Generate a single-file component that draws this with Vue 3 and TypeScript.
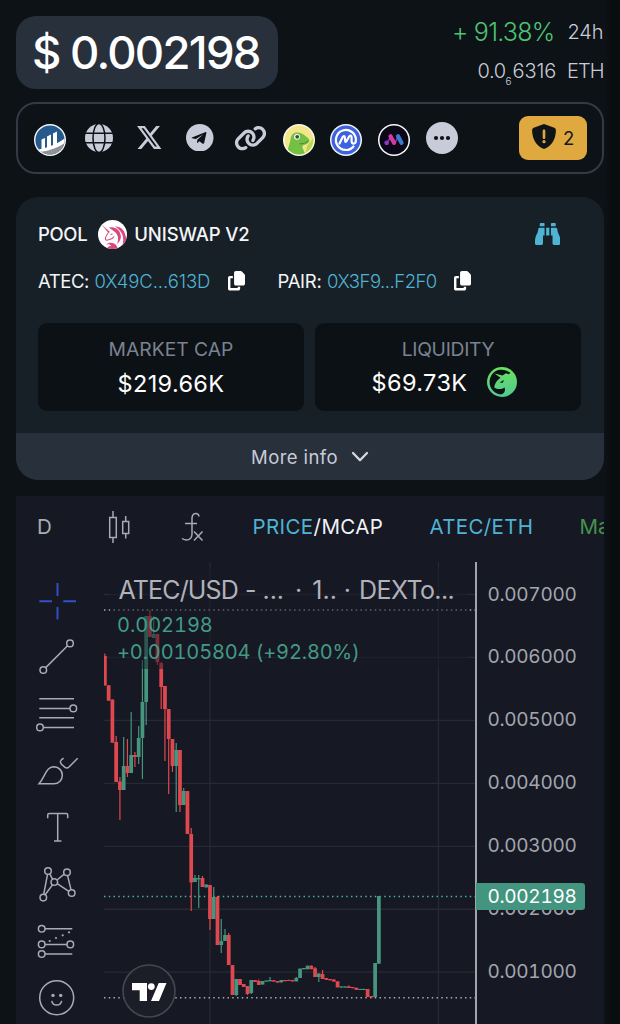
<script setup lang="ts">
interface Candle {
  high: number
  top: number
  bottom: number
  low: number
  up: boolean
}

const STEP = 3.753
const FIRST = 104.9

// Each entry: high, body top, body bottom, low, direction (1 = up, 0 = down)
const raw: [number, number, number, number, number][] = [
  [653.5, 656, 685.5, 685.5, 0], [685.3, 685.3, 700.7, 700.7, 0], [699.5, 699.5, 742.7, 742.7, 0],
  [736, 742, 782, 782, 0], [777, 781.5, 790, 820, 0], [737, 766, 790, 790, 1], [739, 766, 773, 777, 0],
  [712, 755, 773, 773, 1], [752, 755, 757, 767, 0], [726, 738, 757, 764, 1], [660, 702, 738, 779, 1],
  [616, 616, 702, 725, 1], [610, 616, 637, 637, 0], [616, 634, 638, 638, 1], [634, 634, 662, 665, 0],
  [662, 663, 687, 709, 0], [686, 686, 709, 761, 0], [709, 709, 739, 794, 0], [739, 739, 766, 772, 0],
  [743, 750, 766, 812, 1], [750, 750, 805, 812, 0], [788, 791, 805, 805, 1], [791, 791, 834, 834, 0],
  [828, 834, 882.5, 911, 0], [875, 878, 882, 882, 1], [875, 878, 879.4, 908, 1], [876, 878, 887, 887, 0],
  [884.5, 884.5, 887.4, 887.4, 1], [885, 885, 919, 930, 0], [887, 897, 919, 919, 1], [896, 897, 945, 945, 0],
  [919, 941, 945, 953, 1], [929, 935, 941, 941, 1], [933, 935, 965, 965, 0], [965, 965, 995, 995, 0],
  [979, 979, 995, 996, 1], [979, 979, 985, 985, 0], [984, 984, 987, 987, 0], [986, 986, 994, 995, 0],
  [980, 980, 993, 994, 1], [980, 980, 982, 982, 0], [979.5, 981, 985, 985, 0], [981, 981, 984.5, 984.5, 1],
  [980.5, 980.5, 981.7, 981.7, 1], [977, 980, 981.3, 981.3, 1], [980.2, 980.2, 981.6, 981.6, 0],
  [981, 981, 982.6, 982.6, 0], [980, 980, 982.4, 982.4, 1], [980, 980, 981.2, 981.2, 0],
  [979.6, 980, 981, 981, 0], [980, 980, 981.4, 981.4, 0], [977, 978, 981.4, 981.4, 1], [968.6, 968.6, 978, 978, 1],
  [968, 968, 969.3, 969.3, 1], [965.7, 965.7, 969.2, 969.2, 1], [965.3, 965.7, 969.2, 969.2, 0],
  [967, 968.3, 977, 977, 0], [973.5, 973.5, 977, 982, 1], [970, 974, 979, 979, 0], [978, 978, 979.8, 979.8, 0],
  [979, 979, 980.3, 980.3, 0], [979.3, 979.5, 981.6, 981.6, 0], [981.3, 981.3, 987.4, 987.4, 0],
  [986.4, 986.4, 987.6, 987.6, 1], [986.4, 986.4, 987.6, 987.6, 1], [985.4, 986.4, 988, 988, 0],
  [987, 987, 988.2, 988.2, 0], [987.5, 987.8, 989.8, 989.8, 0], [988.9, 988.9, 990, 990, 1],
  [988.9, 988.9, 990, 990, 1], [989, 989, 997, 997, 0], [996, 996, 997.4, 997.4, 0],
  [963, 963, 997, 997, 1], [896, 896, 963.7, 963.7, 1],
]

const candles: Candle[] = raw.map(([high, top, bottom, low, up]) => ({ high, top, bottom, low, up: up === 1 }))
const prices = ['0.007000', '0.006000', '0.005000', '0.004000', '0.003000', '0.002000', '0.001000']
const gridY = prices.map((_, i) => 594.5 + i * 62.95)
</script>

<template>
  <main class="page">
    <header class="top">
      <div class="price"><span>$ 0.002198</span></div>
      <div class="change">
        <div class="row"><span class="pct">+ 91.38%</span><span class="unit">24h</span></div>
        <div class="row"><span class="eth"><span class="lead">0.0</span><sub>6</sub><span>6316</span></span><span class="unit">ETH</span></div>
      </div>
    </header>

    <nav class="links">
      <svg class="ic coin" viewBox="0 0 32 32">
        <defs><clipPath id="c1"><circle cx="16" cy="16" r="14.6" /></clipPath></defs>
        <circle cx="16" cy="16" r="16" fill="#f4f6f8" />
        <g clip-path="url(#c1)">
          <rect width="32" height="32" fill="#275a8c" />
          <path d="M0 27.500C9 26 18 24 32 14V32H0Z" fill="#8f9196" />
          <path d="M0 26C10 25 20 22 32 13.500V18C24 24 14 27.500 2 28.500Z" fill="#fff" />
          <path d="M7.500 15.500 11 14V26H7.500ZM13 12.500 17 10.500V25H13ZM19 9.500 23 7.500V22H19Z" fill="#fff" />
        </g>
      </svg>
      <svg class="ic globe" viewBox="0 0 28 28">
        <circle cx="14" cy="14" r="14" fill="#c9cbd9" />
        <g fill="none" stroke="#0d1216" stroke-width="1.500">
          <ellipse cx="14" cy="14" rx="6" ry="14.500" />
          <path d="M0 9.200H28M0 18.800H28" />
        </g>
      </svg>
      <svg class="ic xlogo" viewBox="1.200 2.200 21.700 19.600" preserveAspectRatio="none">
        <path fill="#c9cbd9" d="M18.244 2.250h3.308l-7.227 8.260 8.502 11.240H16.170l-5.214-6.817L4.990 21.750H1.680l7.730-8.835L1.254 2.250H8.080l4.713 6.231zm-1.161 17.520h1.833L7.084 4.126H5.117z" />
      </svg>
      <svg class="ic tg" viewBox="0 0 28 28">
        <circle cx="14" cy="14" r="14" fill="#c9cbd9" />
        <path d="M6 13.700 19.500 8.300C20.500 8 20.900 8.600 20.700 9.500L18.500 19.400C18.300 20.200 17.700 20.400 17 20L13.700 17.500 12 19.200C11.700 19.500 11.300 19.500 11.300 19L11.500 16 17.400 10.600 10 15.200 6.200 14.400C5.600 14.200 5.500 13.900 6 13.700Z" fill="#0d1216" />
      </svg>
      <svg class="ic chain" viewBox="0 0 640 512">
        <path fill="#c9cbd9" d="M579.8 267.700c56.500-56.500 56.500-148 0-204.500c-50-50-128.800-56.500-186.300-15.400l-1.600 1.100c-14.400 10.300-17.700 30.300-7.400 44.600s30.300 17.700 44.600 7.400l1.600-1.100c32.100-22.900 76-19.300 103.800 8.600c31.500 31.500 31.500 82.500 0 114L422.300 334.800c-31.500 31.500-82.500 31.500-114 0c-27.900-27.900-31.500-71.800-8.600-103.800l1.100-1.600c10.300-14.400 6.900-34.400-7.400-44.600s-34.400-6.900-44.600 7.400l-1.100 1.600C206.500 251.200 213 330 263 380c56.500 56.500 148 56.500 204.500 0L579.800 267.700zM60.200 244.300c-56.500 56.500-56.500 148 0 204.500c50 50 128.800 56.500 186.300 15.400l1.600-1.100c14.400-10.300 17.700-30.300 7.400-44.600s-30.300-17.700-44.600-7.400l-1.600 1.100c-32.100 22.900-76 19.300-103.800-8.600C74 372 74 321 105.500 289.500L217.700 177.200c31.500-31.500 82.500-31.500 114 0c27.900 27.900 31.500 71.800 8.600 103.900l-1.100 1.600c-10.300 14.400-6.900 34.400 7.400 44.600s34.400 6.900 44.600-7.400l1.100-1.600C433.500 260.800 427 182 377 132c-56.500-56.500-148-56.500-204.500 0L60.200 244.300z" />
      </svg>
      <svg class="ic coin gecko" viewBox="0 0 32 32">
        <defs><clipPath id="c2"><circle cx="16" cy="16" r="14.400" /></clipPath></defs>
        <circle cx="16" cy="16" r="16" fill="#f7f8ee" />
        <g clip-path="url(#c2)">
          <rect width="32" height="32" fill="#f3e58a" />
          <path d="M24 22 32 12V32H22Z" fill="#b9d84e" />
          <path d="M4 32C4 25 7 20 7.500 15.500C8 11 10.500 8.500 14 8.500C18 8.500 20 10 23 12.500C25.500 14.500 27 15.500 26 18C24.500 20.500 21 20.500 19.500 22C19 25 22 27 22.500 32Z" fill="#74c043" />
          <path d="M16.500 19.800C20 20 23.500 18.800 25.500 16.500" fill="none" stroke="#3f7f2f" stroke-width=".8" />
          <circle cx="14" cy="12.800" r="2.900" fill="#fff" /><circle cx="14.200" cy="12.800" r="1.900" fill="#3b4a43" />
        </g>
      </svg>
      <svg class="ic coin cmc" viewBox="0 0 32 32">
        <circle cx="16" cy="16" r="16" fill="#f3f5fb" />
        <circle cx="16" cy="16" r="14.500" fill="#3c62e0" />
        <path d="M23.500 22.500A10 10 0 1 1 25.900 15.500C26 18.500 25 19.600 23.600 19.600C22.300 19.600 21.600 18.600 21.600 17V13.500C21.600 11.300 20 11 19 12.700L16.600 17C15.900 18.300 15.200 18 15.100 16.700L14.900 13.500C14.700 11.700 13.500 11.600 12.700 13L9.500 19.500" fill="none" stroke="#fff" stroke-width="2.200" stroke-linecap="round" stroke-linejoin="round" />
      </svg>
      <svg class="ic coin moon" viewBox="0 0 32 32">
        <circle cx="16" cy="16" r="16" fill="#fafafc" />
        <circle cx="16" cy="16" r="14.500" fill="#0a0816" />
        <path d="M8.500 19 13 13M17 19 20 13" stroke="#7d37c4" stroke-width="1.600" />
        <g stroke-linecap="round" stroke-width="4.200">
          <path d="M12.500 12.300 16 18.800" stroke="#d83a9c" />
          <path d="M20 12.300 23.500 18.800" stroke="#3a7bd0" />
        </g>
        <circle cx="8.700" cy="18.800" r="2.400" fill="#8b37c4" />
      </svg>
      <svg class="ic more" viewBox="0 0 32 32">
        <circle cx="16" cy="16" r="16" fill="#c9cbd9" />
        <g fill="#0d1216"><circle cx="10" cy="16" r="2.100" /><circle cx="16" cy="16" r="2.100" /><circle cx="22" cy="16" r="2.100" /></g>
      </svg>
      <div class="alert">
        <svg viewBox="0 0 24 25">
          <path d="M12 0 22.300 3.700Q23.900 4.400 23.900 6C23.900 15 20 21.800 12 25C4 21.800.1 15 .1 6Q.1 4.400 1.700 3.700Z" fill="#0f1417" />
          <path d="M12 6.800V13.800" stroke="#e0a93f" stroke-width="2.600" stroke-linecap="round" />
          <circle cx="12" cy="17.700" r="1.600" fill="#e0a93f" />
        </svg>
        <span>2</span>
      </div>
    </nav>

    <section class="card">
      <div class="pool">
        <span class="pool-word">POOL</span>
        <svg class="uni" viewBox="0 0 29 29">
          <defs><clipPath id="c3"><circle cx="14.500" cy="14.500" r="14.500" /></clipPath></defs>
          <circle cx="14.500" cy="14.500" r="14.500" fill="#fff" />
          <g clip-path="url(#c3)" fill="#d9487f">
            <path d="M3.500 4.500 12 12 10.500 13Z" />
            <path d="M11 7.500C15 6.500 19 8 21 11C23 14 24 18 21 22L19 24C21 19 20 15 17.500 12.500C15.500 10.500 13 9.500 11 7.500Z" />
            <path d="M17 6.500C21 6.500 25 8.500 26.500 12.500L29 20 24 27C26 21 25.500 15 22.500 11.500C21 9.500 19 7.500 17 6.500Z" />
            <path d="M8 24.500C11 22 16 22 18.500 25.500L20 29H9C10 26 12 25.500 13.500 26.500C12.500 24 10 24 8 24.500Z" />
          </g>
          <path d="M10.500 12.500C8.500 15 7 17.500 7.500 19.500C8.500 21 10 20 11.500 19.500C13.500 19 15 18.500 16 16.500M12.500 14.500 14.500 14" fill="none" stroke="#d9487f" stroke-width="1.100" />
        </svg>
        <span class="dex">UNISWAP V2</span>
        <svg class="bino" viewBox="0 32 512 448" preserveAspectRatio="none">
          <path fill="#4fb3d3" d="M416 48c0-8.800-7.200-16-16-16h-64c-8.800 0-16 7.200-16 16v48h96V48zM63.910 159.990C61.400 253.840 3.460 274.220 0 404v44c0 17.670 14.330 32 32 32h96c17.670 0 32-14.330 32-32V288h32V128H95.840c-17.630 0-31.450 14.370-31.930 31.990zm384.180 0c-.480-17.620-14.300-31.990-31.930-31.990H320v160h32v160c0 17.670 14.330 32 32 32h96c17.670 0 32-14.330 32-32v-44c-3.460-129.780-61.400-150.160-63.910-244.010zM176 32h-64c-8.800 0-16 7.200-16 16v48h96V48c0-8.800-7.200-16-16-16zm48 256h64V128h-64v160z" />
        </svg>
      </div>
      <div class="addresses">
        <span class="key">ATEC:</span>
        <a>0X49C...613D</a>
        <svg class="copy" viewBox="0 0 448 512"><path fill="#fff" d="M208 0H332.100c12.700 0 24.900 5.100 33.900 14.100l67.900 67.900c9 9 14.100 21.200 14.100 33.900V336c0 26.500-21.500 48-48 48H208c-26.500 0-48-21.500-48-48V48c0-26.500 21.500-48 48-48zM48 128h80v64H64V448H256V416h64v48c0 26.500-21.500 48-48 48H48c-26.500 0-48-21.500-48-48V176c0-26.500 21.500-48 48-48z" /></svg>
        <span class="pair">PAIR:</span>
        <a>0X3F9...F2F0</a>
        <svg class="copy" viewBox="0 0 448 512"><path fill="#fff" d="M208 0H332.100c12.700 0 24.900 5.100 33.900 14.100l67.900 67.900c9 9 14.100 21.200 14.100 33.900V336c0 26.500-21.500 48-48 48H208c-26.500 0-48-21.500-48-48V48c0-26.500 21.500-48 48-48zM48 128h80v64H64V448H256V416h64v48c0 26.500-21.500 48-48 48H48c-26.500 0-48-21.500-48-48V176c0-26.500 21.500-48 48-48z" /></svg>
      </div>
      <div class="stats">
        <div class="stat">
          <div class="label">MARKET CAP</div>
          <div class="value">$219.66K</div>
        </div>
        <div class="stat">
          <div class="label">LIQUIDITY</div>
          <div class="value liq">
            <span>$69.73K</span>
            <svg viewBox="0 0 30 30">
              <defs><linearGradient id="g1" x1="0" y1="0" x2="0" y2="1"><stop offset="0" stop-color="#6be35c" /><stop offset="1" stop-color="#52c795" /></linearGradient></defs>
              <circle cx="15" cy="15" r="15" fill="url(#g1)" />
              <path d="M12.500 2.800C6.500 4 2.600 9 2.600 15C2.600 21.500 7.500 27 14 27.500C17.500 26.500 18.800 23.500 17.500 20.500C14.500 22.500 10.500 22.500 7.200 20.500C7.500 16.500 10 13.500 13.500 10.800L7.500 6.500 15.500 8.500 19 6.200 21.500 7.200 23.500 6C20.500 3.500 16.500 2.200 12.500 2.800Z" fill="#0c1115" />
              <path d="M12.500 15.500 17 13 15.800 15.800Z" fill="#0c1115" />
            </svg>
          </div>
        </div>
      </div>
      <button class="more-info"><span>More info</span>
        <svg viewBox="0 0 18 12"><path d="M2 2 9 9.200 16 2" fill="none" stroke="#d6d8e0" stroke-width="2.300" stroke-linecap="round" stroke-linejoin="round" /></svg>
      </button>
    </section>

    <section class="chart">
      <div class="toolbar">
        <span class="tf">D</span>
        <svg class="t-candle" viewBox="108 509 22 34"><path d="M109.700 516.500h6.600v20h-6.600zM113 510v6.500M113 536.500v5.500M122.700 520.500h6v12h-6zM125.700 515v5.500M125.700 532.500v5" /></svg>
        <svg class="t-fx" viewBox="180 510 24 31"><path d="M199 515.500C198.500 511.500 192.500 511 192 517V533C191.800 539 186.500 540.500 182 537.500M185 522.500H197M194 530.500 202.500 539.500M202.500 530.500 194 539.500" /></svg>
        <span class="mode"><b>PRICE</b>/MCAP</span>
        <b class="quote">ATEC/ETH</b>
        <span class="market">Market</span>
      </div>
      <div class="body">
        <aside class="tools">
          <svg class="active" viewBox="-24 -28.300 48 56.600"><path d="M.5-18.300V-5.300M.5 5.700V18.300M-17.700 0H-5M6.300 0H19" /></svg>
          <svg viewBox="-24 -28.300 48 56.600"><circle cx="-13.700" cy="12.700" r="3.300" /><circle cx="13" cy="-13.900" r="3.300" /><path d="M-11.300 10.300 10.600-11.500" /></svg>
          <svg viewBox="-24 -28.300 48 56.600"><path d="M-17.700-15.500H17M-17.700-5.900H13M-17.700 3.500H17M-13.700 13.100H17" /><circle cx="16.300" cy="-5.900" r="3.300" /><circle cx="-17" cy="13.100" r="3.300" /></svg>
          <svg viewBox="-24 -28.300 48 56.600"><path d="M-18 13.500C-14 9-12.500 4-10.300.9C-8.500-2-6-3.500-2.700-3.500A8.300 8.300 0 0 1 5.300 4.900C5.300 9.500 2 13.500-3 13.500ZM6.700-12.100C3-10.500 2.800-8 4.500-6L8-2.900Q10-1.500 12-3.300L20.700-12.100" /></svg>
          <svg viewBox="-24 -28.300 48 56.600"><path d="M-9.300-9V-12.200Q-9.300-13.700-7.800-13.700H9.200Q10.700-13.700 10.700-12.200V-9M.7-13.700V13.600M-3 13.600H4.400" /></svg>
          <svg viewBox="-24 -28.300 48 56.600"><circle cx="-9" cy="-13.300" r="3.300" /><circle cx="10" cy="-12" r="3.300" /><circle cx="-2.700" cy="-2.300" r="3.300" /><circle cx="14.700" cy="8.700" r="3.300" /><circle cx="-13.700" cy="13.300" r="3.300" /><path d="M-9.500-10-13.300 10M-7.200-10.500-4.500-5.100M0-4.300 7.200-10.200M10.600-8.700 14 5.400M.2-.7 11.900 7M-4.500.6-11.900 10.400" /></svg>
          <svg viewBox="-24 -28.300 48 56.600"><circle cx="-15.300" cy="-11.600" r="3.300" /><circle cx="-15.300" cy="4.100" r="3.300" /><circle cx="13.300" cy="4.100" r="3.300" /><circle cx="-15.300" cy="13.700" r="3.300" /><path d="M-12-11.600H15.300M-12 4.100H10M-12 13.700H15.300" /><g class="dot"><circle cx="-7.300" cy=".7" r="1.100" /><circle cx="-1" cy="-2.300" r="1.100" /><circle cx="5.700" cy="-5" r="1.100" /><circle cx="12" cy="-8" r="1.100" /></g></svg>
          <svg viewBox="-24 -28.300 48 56.600"><circle cx="-.3" cy=".5" r="17" /><path d="M-5.300 3.500C-4 9.200 3.400 9.200 4.700 3.500" /><g class="dot"><circle cx="-4" cy="-1.900" r="1.700" /><circle cx="3.700" cy="-1.900" r="1.700" /></g></svg>
        </aside>
        <div class="plot">
          <svg class="series" viewBox="104 562 371 462">
            <g stroke="#272933" stroke-width="1.300">
              <line v-for="y in gridY" :key="y" x1="104" x2="475" :y1="y" :y2="y" />
              <line x1="210" x2="210" y1="562" y2="1024" /><line x1="438.500" x2="438.500" y1="562" y2="1024" />
            </g>
            <g stroke-width="1.400" stroke-dasharray="1.500 3.250">
              <line x1="104" x2="475" y1="610" y2="610" stroke="#a6a8b0" />
              <line x1="104" x2="475" y1="997.700" y2="997.700" stroke="#a6a8b0" />
              <line x1="104" x2="475" y1="896.500" y2="896.500" stroke="#4fae98" />
            </g>
            <g v-for="(c, i) in candles" :key="i" :fill="c.up ? '#45957f' : '#e0484f'">
              <rect :x="FIRST + i * STEP - 0.6" :y="c.high" width="1.200" :height="c.low - c.high" />
              <rect :x="FIRST + i * STEP - 1.870" :y="c.top" width="3.740" :height="c.bottom - c.top" />
            </g>
          </svg>
          <div class="legend">
            <div class="title"><span class="sym">ATEC/USD</span><span class="dash">-</span><span>...</span><span class="sep">·</span><span>1..</span><span>·</span><span class="src">DEXTo...</span></div>
            <div class="last">0.002198</div>
            <div class="delta">+0.00105804 (+92.80%)</div>
          </div>
          <svg class="tv" viewBox="122 964 54 54">
            <circle cx="149" cy="991" r="26" fill="#1b1d27" stroke="#454750" stroke-width="1.600" />
            <path d="M132 983H147V1001H139.700V990.300H132ZM158.700 983H166.500L159 1001H151Z" fill="#fff" /><circle cx="151.300" cy="986.600" r="3.400" fill="#fff" />
          </svg>
        </div>
        <div class="axis">
          <div v-for="p in prices" :key="p" class="tick">{{ p }}</div>
          <div class="tag">0.002198</div>
        </div>
      </div>
    </section>
  </main>
</template>

<style>
html, body { margin: 0; background: #0d1216; overflow: hidden; }
</style>

<style scoped>
* { box-sizing: border-box; }
.page { width: 620px; height: 1024px; overflow: hidden; padding: 12px 16px 0; background: linear-gradient(90deg, #0d1216 604px, #090d10 612px); font-family: Inter, "Liberation Sans", sans-serif; color: #f4f5f8; display: flex; flex-direction: column; }
svg { display: block; flex: none; }
span, a, b { white-space: pre; font-weight: inherit; display: inline-block; }
.top { display: flex; justify-content: space-between; height: 90px; }
.price { width: 262px; height: 73px; margin-top: 4px; border-radius: 20px; background: #28313b; font-size: 45.500px; font-weight: 500; line-height: 73px; letter-spacing: -1.750px; padding-left: 16px; color: #fff; }
.change { color: #c9cbd9; padding-right: .5px; }
.row { display: flex; justify-content: flex-end; align-items: center; height: 39.500px; font-size: 20px; font-weight: 350; gap: 13px; }
.unit { letter-spacing: -.1px; }
.row + .row .unit { letter-spacing: -1px; }
.row + .row { gap: 11px; }
.pct { color: #4cc374; font-size: 25px; letter-spacing: -.750px; }
.eth { display: flex; align-items: center; letter-spacing: -.150px; }
.lead { letter-spacing: -.4px; }
.eth sub { font-size: 10px; line-height: 12px; width: 7px; transform: translateY(10px); vertical-align: baseline; letter-spacing: 0; }
.links { height: 72px; flex: none; border: 2px solid #333a44; border-radius: 20px; display: flex; align-items: center; padding: 0 15px 0 16px; }
.ic { width: 32px; height: 32px; }
.coin { margin-top: 3px; }
.globe { width: 28px; height: 28px; margin: 0 0 0 19px; }
.xlogo { width: 24.500px; height: 23px; margin: 0 0 1px 24px; }
.tg { width: 27.500px; height: 27.500px; margin: 0 0 1px 24.500px; }
.chain { width: 33px; height: 26.400px; margin: 0 0 0 20px; }
.gecko { margin-left: 16px; }
.cmc { margin-left: 15.500px; }
.moon { margin-left: 15.500px; }
.more { margin: 0 0 0 16px; }
.alert { margin-left: auto; width: 68px; height: 44px; border-radius: 9px; background: #e0a93f; display: flex; align-items: center; padding-left: 13px; gap: 7px; color: #14181b; font-size: 18.500px; }
.alert svg { width: 24px; height: 25px; margin-bottom: 3px; }
.card { margin-top: 23px; height: 283px; flex: none; border-radius: 22px; background: #182027; overflow: hidden; display: flex; flex-direction: column; }
.pool { display: flex; align-items: center; height: 44px; margin-top: 15px; padding: 0 44px 0 22px; font-size: 18.500px; font-weight: 500; }
.pool-word { letter-spacing: -.350px; }
.dex { letter-spacing: -.120px; }
.uni { width: 29px; height: 29px; margin: 0 7px 0 11px; }
.bino { width: 25.500px; height: 22px; margin: 0 0 1px auto; }
.addresses { display: flex; align-items: center; height: 44px; margin-top: 3px; padding-left: 22px; font-size: 18.500px; }
.addresses a { color: #4fb3d3; margin-left: 4px; font-weight: 350; letter-spacing: -.080px; width: 117px; }
.key { width: 52.500px; letter-spacing: -.450px; }
.copy { width: 17px; height: 19.500px; margin-left: 16.500px; }
.pair { margin-left: 32.500px; width: 45.500px; letter-spacing: -.3px; }
.pair + a { width: 110px; letter-spacing: -.5px; }
.stats { display: flex; gap: 11px; padding: 0 23px 0 22px; margin-top: 20px; }
.stat { flex: 1; height: 88px; border-radius: 9px; background: #0c1115; text-align: center; padding-top: 11px; }
.label { height: 30px; line-height: 30px; font-size: 19.300px; color: #7b8292; }
.stat:last-child .label { letter-spacing: -.3px; }
.value { height: 39px; line-height: 39px; font-size: 23.500px; letter-spacing: .350px; color: #fff; }
.liq { display: flex; justify-content: center; align-items: center; gap: 19px; margin-top: -1px; padding-right: 8px; }
.liq span { letter-spacing: .4px; }
.liq svg { width: 30px; height: 30px; margin-bottom: 2px; }
.more-info { margin-top: auto; height: 47px; border: 0; background: #28313b; color: #c9cbd9; font: 400 18.500px Inter, sans-serif; letter-spacing: .4px; display: flex; align-items: center; justify-content: center; gap: 13px; padding: 0; }
.more-info svg { width: 18px; height: 12px; }
.chart { margin-top: 16px; flex: 1; background: #161823; overflow: hidden; display: flex; flex-direction: column; }
.toolbar { display: flex; align-items: center; height: 61px; flex: none; padding-left: 21px; font-size: 20.500px; color: #f1f2f6; }
.toolbar > * { flex: none; }
.toolbar b { color: #4fb3d3; font-weight: inherit; }
.toolbar svg { fill: none; stroke: #a9abb4; stroke-width: 1.500; }
.toolbar .tf { color: #a9abb4; width: 71px; }
.t-candle { width: 22px; height: 34px; }
.t-fx { width: 24px; height: 31px; margin-left: 50px; }
.mode { margin-left: 48.500px; width: 132px; letter-spacing: .4px; }
.quote { margin-left: 45px; width: 104px; letter-spacing: .350px; }
.toolbar .market { margin-left: 46px; color: #46934a; }
.body { display: flex; flex: 1; margin-top: 5px; }
.tools { width: 88px; padding: 10.700px 0 0 17px; flex: none; }
.tools svg { width: 48px; height: 56.600px; fill: none; stroke: #a9abb4; stroke-width: 1.500; }
.tools .active { stroke: #3450c8; stroke-width: 1.900; }
.tools .dot, .dot circle { fill: #a9abb4; stroke: none; }
.plot { position: relative; width: 371px; flex: none; }
.series { width: 371px; height: 462px; }
.legend { position: absolute; left: 6px; top: 6px; width: 358px; height: 101px; padding: 4px 0 0 7px; background: rgba(22, 24, 35, .5); color: #439a86; font-size: 20px; font-feature-settings: "tnum"; }
.title { display: flex; height: 36px; line-height: 36px; font-size: 25px; color: #b0b2ba; gap: 7px; padding-left: 1.500px; font-feature-settings: normal; }
.sym { letter-spacing: -.850px; }
.dash { margin-right: -1px; }
.sep { margin: 0 3px 0 4px; }
.src { letter-spacing: -.6px; margin-left: 1px; }
.last, .delta { width: max-content; height: 27px; line-height: 27px; white-space: pre; }
.last { margin-top: 4px; letter-spacing: -.050px; }
.delta { letter-spacing: -.150px; }
.tv { position: absolute; left: 18px; top: 402px; width: 54px; height: 54px; }
.axis { position: relative; flex: 1; border-left: 2px solid #a2a4ab; padding-top: 1.500px; font-size: 19px; color: #a3a6ae; font-feature-settings: "tnum"; letter-spacing: -.3px; }
.tick { height: 62.950px; line-height: 62.950px; padding-left: 10.500px; }
.tag { position: absolute; left: -1px; top: 321px; width: 109px; height: 27px; line-height: 27px; padding-left: 11.500px; border-radius: 0 3px 3px 0; background: #43957f; color: #fff; }
</style>
